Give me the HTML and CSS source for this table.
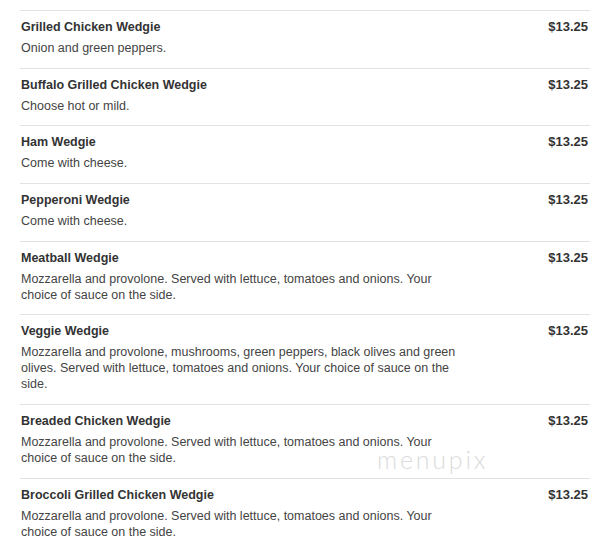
FILE: index.html
```html
<!DOCTYPE html>
<html>
<head>
<meta charset="utf-8">
<link rel="stylesheet" href="styles.css">
</head>
<body>
<div class="menu">
  <div class="item">
    <div class="info">
      <div class="name">Grilled Chicken Wedgie</div>
      <div class="desc">Onion and green peppers.</div>
    </div>
    <div class="price">$13.25</div>
  </div>
  <div class="item">
    <div class="info">
      <div class="name">Buffalo Grilled Chicken Wedgie</div>
      <div class="desc">Choose hot or mild.</div>
    </div>
    <div class="price">$13.25</div>
  </div>
  <div class="item">
    <div class="info">
      <div class="name">Ham Wedgie</div>
      <div class="desc">Come with cheese.</div>
    </div>
    <div class="price">$13.25</div>
  </div>
  <div class="item">
    <div class="info">
      <div class="name">Pepperoni Wedgie</div>
      <div class="desc">Come with cheese.</div>
    </div>
    <div class="price">$13.25</div>
  </div>
  <div class="item">
    <div class="info">
      <div class="name">Meatball Wedgie</div>
      <div class="desc">Mozzarella and provolone. Served with lettuce, tomatoes and onions. Your choice of sauce on the side.</div>
    </div>
    <div class="price">$13.25</div>
  </div>
  <div class="item">
    <div class="info">
      <div class="name">Veggie Wedgie</div>
      <div class="desc">Mozzarella and provolone, mushrooms, green peppers, black olives and green olives. Served with lettuce, tomatoes and onions. Your choice of sauce on the side.</div>
    </div>
    <div class="price">$13.25</div>
  </div>
  <div class="item">
    <div class="info">
      <div class="name">Breaded Chicken Wedgie</div>
      <div class="desc">Mozzarella and provolone. Served with lettuce, tomatoes and onions. Your choice of sauce on the side.</div>
    </div>
    <div class="price">$13.25</div>
  </div>
  <div class="item">
    <div class="info">
      <div class="name">Broccoli Grilled Chicken Wedgie</div>
      <div class="desc">Mozzarella and provolone. Served with lettuce, tomatoes and onions. Your choice of sauce on the side.</div>
    </div>
    <div class="price">$13.25</div>
  </div>
  <div class="watermark">menupix</div>
</div>
</body>
</html>
```
FILE: styles.css
```css
html, body {
  margin: 0;
  padding: 0;
  background: #ffffff;
}
body {
  font-family: "Liberation Sans", Arial, sans-serif;
  font-size: 12.5px;
  line-height: 16px;
}
.menu {
  position: relative;
  padding: 10px 21px 0 20px;
}
.item {
  display: flex;
  justify-content: space-between;
  align-items: flex-start;
  border-top: 1px solid #e3e3e3;
  padding: 8px 2px 11.7px 1px;
}
.info {
  display: flex;
  flex-direction: column;
  gap: 5px;
  max-width: 445px;
}
.name {
  font-weight: bold;
  color: #333333;
}
.desc {
  color: #444444;
}
.price {
  font-weight: bold;
  font-size: 13px;
  color: #333333;
}
.watermark {
  position: absolute;
  left: 377px;
  top: 451px;
  font-family: "Lato", "DejaVu Sans", sans-serif;
  font-weight: 300;
  font-size: 25px;
  line-height: 16px;
  letter-spacing: 2.8px;
  color: #dcdcdc;
}
```
